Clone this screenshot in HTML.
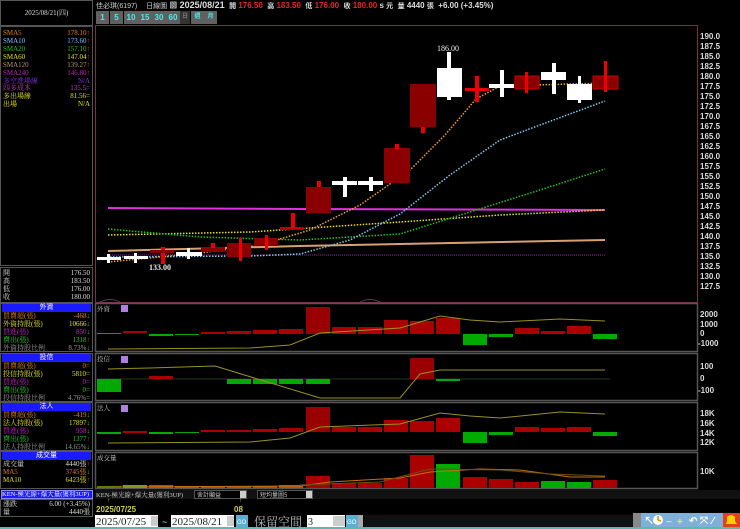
<!DOCTYPE html>
<html><head><meta charset="utf-8"><style>
*{margin:0;padding:0;box-sizing:border-box}
body{width:740px;height:529px;background:#000;overflow:hidden;position:relative;font-family:"Liberation Sans","Noto Sans CJK TC",sans-serif;color:#ddd}
.a{position:absolute}
.lp{left:0;width:93px;border:1px solid #555}
.row{position:absolute;left:2px;right:2px;height:8px;font-size:7px;line-height:8px;font-family:"Liberation Serif","Noto Serif CJK SC",serif}
.row span{position:absolute;right:0}
.hdr{position:absolute;left:1px;right:1px;height:8px;background:#1a1aff;color:#fff;font-size:7px;line-height:8px;text-align:center}
.btn{position:absolute;top:11px;height:13px;background:#606060;color:#4ee;font-size:8px;line-height:13px;text-align:center;font-weight:bold}
</style></head><body>
<div class="a lp" style="top:0;height:26px;font-size:7px;line-height:24px;text-align:center;font-family:'Liberation Serif','Noto Serif CJK SC',serif">2025/08/21(四)</div>
<div class="a lp" style="top:26px;height:240px">
<div class="row" style="top:2px;color:#e08020">SMA5<span>178.10<b style="color:#f22">↑</b></span></div>
<div class="row" style="top:10px;color:#7cc0ff">SMA10<span>173.60<b style="color:#f22">↑</b></span></div>
<div class="row" style="top:18px;color:#22c022">SMA20<span>157.10<b style="color:#f22">↑</b></span></div>
<div class="row" style="top:26px;color:#e0e020">SMA60<span>147.04<b style="color:#f22">↑</b></span></div>
<div class="row" style="top:34px;color:#c09070">SMA120<span>139.27<b style="color:#f22">↑</b></span></div>
<div class="row" style="top:42px;color:#c020c0">SMA240<span>146.80<b style="color:#f22">↑</b></span></div>
<div class="row" style="top:50px;color:#8030e0">多空進場線<span>N/A</span></div>
<div class="row" style="top:57px;color:#c040c0">四多成本<span>135.5=</span></div>
<div class="row" style="top:65px;color:#e0e020">多出場線<span>81.56=</span></div>
<div class="row" style="top:73px;color:#e0e020">出場<span>N/A</span></div>
</div>
<div class="a lp" style="top:267px;height:36px">
<div class="row" style="top:1px">開<span>176.50</span></div>
<div class="row" style="top:9px">高<span>183.50</span></div>
<div class="row" style="top:17px">低<span>176.00</span></div>
<div class="row" style="top:25px">收<span>180.00</span></div>
</div>
<div class="a lp" style="top:303px;height:49px">
<div class="hdr" style="top:0">外資</div>
<div class="row" style="top:8px;color:#e08020">買賣超(張)<span>-468<b style="color:#2c2">↓</b></span></div>
<div class="row" style="top:16px;color:#e0e020">外資持股(張)<span>10666<b style="color:#2c2">↓</b></span></div>
<div class="row" style="top:24px;color:#c020c0">買進(張)<span>850<b style="color:#2c2">↓</b></span></div>
<div class="row" style="top:32px;color:#2c2">賣出(張)<span>1318<b style="color:#f22">↑</b></span></div>
<div class="row" style="top:40px;color:#999">外資持股比例<span>8.73%<b style="color:#2c2">↓</b></span></div>
</div>
<div class="a lp" style="top:353px;height:49px">
<div class="hdr" style="top:0">投信</div>
<div class="row" style="top:8px;color:#e08020">買賣超(張)<span>0=</span></div>
<div class="row" style="top:16px;color:#e0e020">投信持股(張)<span>5810=</span></div>
<div class="row" style="top:24px;color:#c020c0">買進(張)<span>0=</span></div>
<div class="row" style="top:32px;color:#2c2">賣出(張)<span>0=</span></div>
<div class="row" style="top:40px;color:#999">投信持股比例<span>4.76%=</span></div>
</div>
<div class="a lp" style="top:402px;height:49px">
<div class="hdr" style="top:0">法人</div>
<div class="row" style="top:8px;color:#e08020">買賣超(張)<span>-419<b style="color:#2c2">↓</b></span></div>
<div class="row" style="top:16px;color:#e0e020">法人持股(張)<span>17897<b style="color:#2c2">↓</b></span></div>
<div class="row" style="top:24px;color:#c020c0">買進(張)<span>958<b style="color:#2c2">↓</b></span></div>
<div class="row" style="top:32px;color:#2c2">賣出(張)<span>1377<b style="color:#f22">↑</b></span></div>
<div class="row" style="top:40px;color:#999">法人持股比例<span>14.65%<b style="color:#2c2">↓</b></span></div>
</div>
<div class="a lp" style="top:451px;height:38px">
<div class="hdr" style="top:0">成交量</div>
<div class="row" style="top:8px;color:#ddd">成交量<span>4440張<b style="color:#f22">↑</b></span></div>
<div class="row" style="top:16px;color:#e08020">MA5<span>3745張<b style="color:#2c2">↓</b></span></div>
<div class="row" style="top:24px;color:#e0e020">MA10<span>6423張<b style="color:#f22">↑</b></span></div>
</div>
<div class="a" style="left:1px;top:490px;width:92px;height:9px;background:#1a1aff;border:1px solid #88f;color:#fff;font-size:6.5px;line-height:7px;white-space:nowrap;overflow:hidden;font-family:'Liberation Serif','Noto Serif CJK SC',serif">KEN-極光線+爆大量(獲利3UP)</div>
<div class="a lp" style="top:499px;height:18px">
<div class="row" style="top:0">漲跌<span>6.00 (+3.45%)</span></div>
<div class="row" style="top:8px">量<span>4440張</span></div>
</div>
<div class="a" style="left:96px;top:0;height:10px;white-space:nowrap;font-size:8px;line-height:10px;font-weight:bold;color:#ddd">
<span style="font-weight:normal;font-size:7px;color:#ccc">佳必琪(6197)</span>&nbsp;&nbsp;&nbsp;&nbsp;<span style="font-weight:normal;font-size:7px;color:#ccc">日線圖</span>&nbsp;▩ <span style="font-size:9px">2025/08/21</span>&nbsp; <span style="font-size:7px">開</span> <span style="color:#e22">176.50</span>&nbsp; <span style="font-size:7px">高</span> <span style="color:#e22">183.50</span>&nbsp; <span style="font-size:7px">低</span> <span style="color:#e22">176.00</span>&nbsp; <span style="font-size:7px">收</span> <span style="color:#e22">180.00</span> s <span style="font-size:7px">元</span>&nbsp; <span style="font-size:7px">量</span> 4440 <span style="font-size:7px">張</span>&nbsp; +6.00 (+3.45%)</div>
<div class="btn" style="left:96px;width:13px">1</div>
<div class="btn" style="left:110px;width:13px">5</div>
<div class="btn" style="left:124px;width:14px">10</div>
<div class="btn" style="left:138px;width:14px">15</div>
<div class="btn" style="left:152px;width:14px">30</div>
<div class="btn" style="left:166px;width:14px">60</div>
<div class="btn" style="left:180px;width:10px;background:#333;color:#777;font-size:6px">日</div>
<div class="btn" style="left:191px;width:13px;font-size:6px">週</div>
<div class="btn" style="left:204px;width:13px;font-size:6px">月</div>

<svg class="a" style="left:0;top:0" width="740" height="529" font-family="Liberation Sans, Noto Sans CJK TC, sans-serif">
<rect x="95.5" y="25.5" width="602" height="277" fill="none" stroke="#7a3040"/>
<g fill="none" stroke="#555" stroke-width="1.5">
<rect x="95.5" y="303.5" width="602" height="48"/>
<rect x="95.5" y="353.5" width="602" height="47"/>
<rect x="95.5" y="402.5" width="602" height="48"/>
<rect x="95.5" y="452.5" width="602" height="36"/>
</g>
<g fill="#ddd" font-size="8" font-weight="bold">
<text x="700" y="39">190.0</text><text x="700" y="49">187.5</text><text x="700" y="59">185.0</text><text x="700" y="69">182.5</text><text x="700" y="79">180.0</text><text x="700" y="89">177.5</text><text x="700" y="99">175.0</text><text x="700" y="109">172.5</text><text x="700" y="119">170.0</text><text x="700" y="129">167.5</text><text x="700" y="139">165.0</text><text x="700" y="149">162.5</text><text x="700" y="159">160.0</text><text x="700" y="169">157.5</text><text x="700" y="179">155.0</text><text x="700" y="189">152.5</text><text x="700" y="199">150.0</text><text x="700" y="209">147.5</text><text x="700" y="219">145.0</text><text x="700" y="229">142.5</text><text x="700" y="239">140.0</text><text x="700" y="249">137.5</text><text x="700" y="259">135.0</text><text x="700" y="269">132.5</text><text x="700" y="279">130.0</text><text x="700" y="289">127.5</text>
<text x="700" y="317">2000</text><text x="700" y="327">1000</text><text x="700" y="336">0</text><text x="698" y="346">-1000</text>
<text x="700" y="369">100</text><text x="700" y="381">0</text><text x="698" y="393">-100</text>
<text x="700" y="416">18K</text><text x="700" y="426">16K</text><text x="700" y="436">14K</text><text x="700" y="445">12K</text>
<text x="700" y="474">10K</text><text x="700" y="497">0</text>
</g>
<polyline points="108,208 300,209 605,210" stroke="#e030e0" stroke-width="2" fill="none"/>
<polyline points="108,251 300,246 605,240" stroke="#d8a070" stroke-width="2" fill="none"/>
<line x1="108" y1="255" x2="605" y2="255" stroke="#9020b0" stroke-dasharray="1 1"/>
<polyline points="108,235 250,232 400,222 500,215 605,210" stroke="#e8e020" stroke-width="1.5" stroke-dasharray="1.5 1.5" fill="none"/>
<polyline points="108,229 200,237 300,240 400,234 470,212 540,190 605,169" stroke="#22c022" stroke-width="1.5" stroke-dasharray="1.5 1.5" fill="none"/>
<polyline points="110,257 250,256 300,254 350,240 400,214 450,175 500,140 540,125 605,101" stroke="#80c8f0" stroke-width="1.5" stroke-dasharray="1.5 1.5" fill="none"/>
<polyline points="108,262 200,253 260,245 310,230 360,205 410,170 445,135 476,99 500,86 605,83" stroke="#f0a030" stroke-width="1.5" stroke-dasharray="1.5 1.5" fill="none"/>
<g stroke-width="0">
<rect x="97" y="257" width="24" height="3" fill="#fff"/><rect x="107" y="254" width="3" height="9" fill="#fff"/>
<rect x="124" y="256" width="24" height="3" fill="#fff"/><rect x="134" y="253" width="3" height="10" fill="#fff"/>
<rect x="161" y="247" width="4" height="17" fill="#e00"/><rect x="150" y="250" width="24" height="3" fill="#8a0000"/>
<rect x="176" y="252" width="26" height="4" fill="#fff"/><rect x="187" y="248" width="3" height="11" fill="#fff"/>
<rect x="201" y="247" width="24" height="5" fill="#8a0000"/><rect x="211" y="243" width="4" height="5" fill="#e00"/>
<rect x="227" y="243" width="24" height="14" fill="#8a0000"/><rect x="239" y="238" width="3" height="23" fill="#e00"/>
<rect x="254" y="238" width="24" height="8" fill="#8a0000"/><rect x="265" y="235" width="3" height="15" fill="#e00"/>
<rect x="280" y="227" width="24" height="3" fill="#b00"/><rect x="291" y="213" width="4" height="15" fill="#e00"/>
<rect x="306" y="187" width="25" height="26" fill="#8a0000"/><rect x="317" y="181" width="4" height="6" fill="#e00"/>
<rect x="332" y="181" width="25" height="4" fill="#fff"/><rect x="343" y="177" width="4" height="20" fill="#fff"/>
<rect x="358" y="181" width="25" height="4" fill="#fff"/><rect x="369" y="177" width="4" height="14" fill="#fff"/>
<rect x="384" y="148" width="26" height="35" fill="#8a0000"/><rect x="395" y="144" width="4" height="5" fill="#e00"/>
<rect x="410" y="84" width="26" height="43" fill="#8a0000"/><rect x="421" y="127" width="4" height="6" fill="#e00"/>
<rect x="437" y="68" width="25" height="29" fill="#fff"/><rect x="447" y="52" width="4" height="48" fill="#fff"/>
<rect x="465" y="88" width="24" height="3" fill="#e00"/><rect x="475" y="76" width="4" height="26" fill="#e00"/>
<rect x="489" y="84" width="25" height="4" fill="#fff"/><rect x="500" y="70" width="4" height="27" fill="#fff"/>
<rect x="515" y="76" width="24" height="13" fill="#8a0000" stroke="#c00" stroke-width="1"/><rect x="525" y="72" width="3" height="21" fill="#e00"/>
<rect x="541" y="72" width="25" height="8" fill="#fff"/><rect x="552" y="63" width="4" height="31" fill="#fff"/>
<rect x="567" y="84" width="25" height="16" fill="#fff"/><rect x="578" y="76" width="3" height="27" fill="#fff"/>
<rect x="593" y="76" width="25" height="13" fill="#8a0000" stroke="#c00" stroke-width="1"/><rect x="604" y="61" width="3" height="31" fill="#e00"/>
</g>
<text x="437" y="51" fill="#eee" font-size="8" font-family="Liberation Serif, serif">186.00</text>
<text x="149" y="270" fill="#eee" font-size="8" font-weight="bold" font-family="Liberation Serif, serif">133.00</text>
<path d="M100,302 Q110,297 120,302 M360,302 Q370,297 380,302" stroke="#445" fill="none"/>
<g fill="#ccc" font-size="6.5" font-family="Liberation Serif, Noto Serif CJK SC, serif">
<text x="97" y="311">外資</text><text x="97" y="361">投信</text><text x="97" y="410">法人</text><text x="97" y="460">成交量</text>
</g>
<rect x="121" y="305" width="7" height="7" fill="#b080e0"/><rect x="121" y="356" width="7" height="7" fill="#b080e0"/><rect x="121" y="405" width="7" height="7" fill="#b080e0"/>
<g>
<rect x="97" y="333" width="24" height="1" fill="#0a0"/><rect x="123" y="331" width="24" height="2" fill="#a00"/><rect x="149" y="334" width="24" height="2" fill="#0a0"/><rect x="175" y="334" width="24" height="1" fill="#0a0"/><rect x="201" y="332" width="24" height="2" fill="#a00"/><rect x="227" y="331" width="24" height="3" fill="#a00"/><rect x="253" y="330" width="24" height="4" fill="#a00"/><rect x="279" y="329" width="24" height="5" fill="#a00"/>
<rect x="306" y="307" width="24" height="27" fill="#9a0000"/><rect x="332" y="327" width="24" height="7" fill="#a00"/><rect x="358" y="327" width="24" height="7" fill="#a00"/><rect x="384" y="320" width="24" height="14" fill="#a00"/><rect x="410" y="321" width="24" height="13" fill="#a00"/><rect x="436" y="318" width="24" height="16" fill="#a00"/>
<rect x="463" y="334" width="24" height="11" fill="#0a0"/><rect x="489" y="334" width="24" height="3" fill="#0a0"/><rect x="515" y="328" width="24" height="6" fill="#a00"/><rect x="541" y="331" width="24" height="3" fill="#a00"/><rect x="567" y="326" width="24" height="8" fill="#a00"/><rect x="593" y="334" width="24" height="5" fill="#0a0"/>
<polyline points="108,349 250,348 290,345 320,333 400,328 440,316 470,320 500,322 560,319 605,321" stroke="#999020" fill="none"/>
</g>
<g>
<line x1="97" y1="379" x2="610" y2="379" stroke="#1a3a1a"/>
<rect x="97" y="379" width="24" height="13" fill="#0a0"/><rect x="149" y="376" width="24" height="3" fill="#a00"/>
<rect x="227" y="379" width="24" height="5" fill="#0a0"/><rect x="253" y="379" width="24" height="5" fill="#0a0"/><rect x="279" y="379" width="24" height="5" fill="#0a0"/><rect x="306" y="379" width="24" height="5" fill="#0a0"/>
<rect x="410" y="358" width="24" height="21" fill="#9a0000"/><rect x="436" y="379" width="24" height="2" fill="#0a0"/>
<polyline points="108,369 150,368 215,366 320,398 400,398 420,374 440,370 605,370" stroke="#999020" fill="none"/>
</g>
<g>
<rect x="97" y="432" width="24" height="2" fill="#0a0"/><rect x="123" y="431" width="24" height="2" fill="#a00"/><rect x="149" y="432" width="24" height="2" fill="#0a0"/><rect x="175" y="432" width="24" height="1" fill="#0a0"/><rect x="201" y="430" width="24" height="2" fill="#a00"/><rect x="227" y="430" width="24" height="2" fill="#a00"/><rect x="253" y="429" width="24" height="3" fill="#a00"/><rect x="279" y="428" width="24" height="4" fill="#a00"/>
<rect x="306" y="407" width="24" height="25" fill="#9a0000"/><rect x="332" y="427" width="24" height="5" fill="#a00"/><rect x="358" y="427" width="24" height="5" fill="#a00"/><rect x="384" y="420" width="24" height="12" fill="#a00"/><rect x="410" y="421" width="24" height="11" fill="#a00"/><rect x="436" y="418" width="24" height="14" fill="#a00"/>
<rect x="463" y="432" width="24" height="11" fill="#0a0"/><rect x="489" y="432" width="24" height="3" fill="#0a0"/><rect x="515" y="427" width="24" height="5" fill="#a00"/><rect x="541" y="428" width="24" height="4" fill="#a00"/><rect x="567" y="427" width="24" height="5" fill="#a00"/><rect x="593" y="432" width="24" height="4" fill="#0a0"/>
<polyline points="108,443 250,442 290,438 320,427 400,424 440,413 470,416 500,418 560,412 605,414" stroke="#999020" fill="none"/>
</g>
<g>
<rect x="97" y="486" width="24" height="2" fill="#080"/><rect x="123" y="485" width="24" height="3" fill="#2c2"/><rect x="149" y="485" width="24" height="3" fill="#c40"/><rect x="175" y="486" width="24" height="2" fill="#c40"/><rect x="201" y="486" width="24" height="2" fill="#c40"/><rect x="227" y="486" width="24" height="2" fill="#c40"/><rect x="253" y="486" width="24" height="2" fill="#c40"/><rect x="279" y="485" width="24" height="3" fill="#c40"/>
<rect x="306" y="476" width="24" height="12" fill="#a00"/><rect x="332" y="483" width="24" height="5" fill="#a00"/><rect x="358" y="483" width="24" height="5" fill="#a00"/><rect x="384" y="478" width="24" height="10" fill="#a00"/>
<rect x="410" y="455" width="24" height="33" fill="#a00"/><rect x="436" y="464" width="24" height="24" fill="#0a0"/><rect x="463" y="477" width="24" height="11" fill="#a00"/><rect x="489" y="479" width="24" height="9" fill="#a00"/><rect x="515" y="482" width="24" height="6" fill="#a00"/><rect x="541" y="481" width="24" height="7" fill="#0a0"/><rect x="567" y="482" width="24" height="6" fill="#0a0"/><rect x="593" y="480" width="24" height="8" fill="#a00"/>
<polyline points="97,487 300,486 330,482 400,478 430,472 480,469 520,470 570,477 605,477" stroke="#c47010" fill="none"/>
<polyline points="300,485 380,482 430,469 500,470 550,474 605,476" stroke="#6b5010" fill="none"/>
</g>
<rect x="95" y="490" width="645" height="9" fill="#111"/>
<text x="96" y="497" fill="#ccc" font-size="6.5" font-family="Liberation Serif, Noto Serif CJK SC, serif">KEN-極光線+爆大量(獲利3UP)</text>
<rect x="194.5" y="490.5" width="52" height="8" fill="#000" stroke="#555"/><rect x="240" y="491" width="6" height="7" fill="#ccc"/>
<text x="197" y="497" fill="#ccc" font-size="6" font-family="Noto Sans CJK TC, sans-serif">舍計顯益</text>
<rect x="257.5" y="490.5" width="55" height="8" fill="#000" stroke="#555"/><rect x="306" y="491" width="6" height="7" fill="#ccc"/>
<text x="260" y="497" fill="#ccc" font-size="6" font-family="Noto Sans CJK TC, sans-serif">短均量圖5</text>
<text x="107" y="502" fill="#cc4" font-size="6">↑</text><text x="239" y="502" fill="#cc4" font-size="6">↑</text>
<text x="96" y="512" fill="#d0d040" font-size="8" font-weight="bold">2025/07/25</text>
<text x="234" y="512" fill="#d0d040" font-size="8" font-weight="bold">08</text>
<rect x="95" y="515" width="63" height="12" fill="#fff"/><text x="96" y="525" fill="#222" font-size="11" font-family="Liberation Serif, serif">2025/07/25</text><rect x="151" y="516" width="7" height="10" fill="#ccc"/>
<text x="162" y="525" fill="#ddd" font-size="9">~</text>
<rect x="171" y="515" width="63" height="12" fill="#fff"/><text x="172" y="525" fill="#222" font-size="11" font-family="Liberation Serif, serif">2025/08/21</text><rect x="227" y="516" width="7" height="10" fill="#ccc"/>
<rect x="236" y="515" width="12" height="12" fill="#5ab0d0"/><text x="237" y="524" fill="#fff" font-size="6">GO</text>
<text x="254" y="526" fill="#bbb" font-size="12" font-family="Noto Serif CJK SC, serif">保留空間</text>
<rect x="307" y="515" width="38" height="12" fill="#fff"/><text x="308" y="525" fill="#222" font-size="10" font-family="Liberation Serif, serif">3</text><rect x="333" y="516" width="12" height="10" fill="#ccc"/>
<rect x="346" y="515" width="12" height="12" fill="#5ab0d0"/><text x="347" y="524" fill="#fff" font-size="6">GO</text>
<rect x="358" y="515" width="5" height="12" fill="#aaa"/>
<rect x="364" y="515" width="278" height="12" fill="#111"/>
<rect x="633" y="513" width="8" height="14" fill="#888"/>
<rect x="641" y="513" width="99" height="14" fill="#7fb0d8"/>
<g font-size="10" font-weight="bold">
<text x="644" y="524" fill="#fff">↖</text><circle cx="658" cy="520" r="5" fill="#fff"/><path d="M658,520 L658,516 M658,520 L661,521" stroke="#e80" stroke-width="1.5"/>
<text x="666" y="525" fill="#ee3">−</text><text x="677" y="525" fill="#ee3">+</text><text x="689" y="524" fill="#fff">↶</text><text x="700" y="524" fill="#fff">⤧</text><text x="712" y="524" fill="#fff">⁄</text>
</g>
<rect x="723" y="513" width="17" height="14" fill="#e04020"/><path d="M726,524 L737,524 L735,521 L735,517 Q731,513 727,517 L727,521 Z" fill="#ffd000"/>
<rect x="0" y="527" width="740" height="2" fill="#5ab8b0"/>
</svg>
</body></html>
